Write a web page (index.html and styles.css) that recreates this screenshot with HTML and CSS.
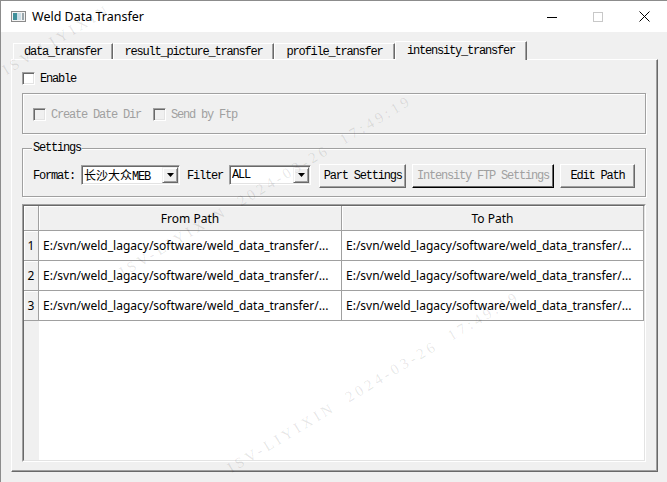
FILE: index.html
```html
<!DOCTYPE html>
<html>
<head>
<meta charset="utf-8">
<title>Weld Data Transfer</title>
<link rel="stylesheet" href="styles.css">
</head>
<body>
<div class="window">
  <div class="titlebar">
    <svg class="app-icon" width="15" height="11" viewBox="0 0 15 11">
      <rect x="0.5" y="0.5" width="14" height="10" fill="#f4f4f4" stroke="#8a8a8a"/>
      <rect x="2" y="2" width="4" height="7" fill="#3f8f9a"/>
      <rect x="6" y="2" width="4" height="7" fill="#c9dde6"/>
      <rect x="11" y="2" width="2" height="7" fill="#9aa7ad"/>
    </svg>
    <span class="title">Weld Data Transfer</span>
    <div class="caption">
      <span class="cap-btn"><svg width="10" height="10" viewBox="0 0 10 10"><path d="M0 5.5H10" stroke="#000" stroke-width="1"/></svg></span>
      <span class="cap-btn"><svg width="10" height="10" viewBox="0 0 10 10"><rect x="0.5" y="0.5" width="9" height="9" fill="none" stroke="#c8c8c8"/></svg></span>
      <span class="cap-btn"><svg width="11" height="11" viewBox="0 0 11 11"><path d="M0.5 0.5L10.5 10.5M10.5 0.5L0.5 10.5" stroke="#000" stroke-width="1"/></svg></span>
    </div>
  </div>

  <div class="client">
    <div class="tabs">
      <div class="tab t1">data_transfer</div>
      <div class="tab t2">result_picture_transfer</div>
      <div class="tab t3">profile_transfer</div>
      <div class="tab sel">intensity_transfer</div>
    </div>
    <div class="pane">
      <div class="check-row">
        <span class="cb"></span><span>Enable</span>
      </div>

      <div class="group g1">
        <span class="cb dis"></span><span class="dis-text">Create Date Dir</span>
        <span class="cb dis second"></span><span class="dis-text">Send by Ftp</span>
      </div>

      <div class="group g2">
        <div class="group-title">Settings</div>
        <div class="settings-row">
          <span>Format:</span>
          <div class="combo c1">
            <span class="combo-text"><span class="cjk">长沙大众</span>MEB</span>
            <span class="drop"><svg width="7" height="4" viewBox="0 0 7 4"><path d="M0 0H7L3.5 4Z" fill="#000"/></svg></span>
          </div>
          <span class="filter-label">Filter</span>
          <div class="combo c2">
            <span class="combo-text">ALL</span>
            <span class="drop"><svg width="7" height="4" viewBox="0 0 7 4"><path d="M0 0H7L3.5 4Z" fill="#000"/></svg></span>
          </div>
          <div class="btn b-part">Part Settings</div>
          <div class="btn b-ftp disabled">Intensity FTP Settings</div>
          <div class="btn b-edit">Edit Path</div>
        </div>
      </div>

      <div class="table">
        <div class="table-in">
          <div class="thead">
            <div class="corner"></div>
            <div class="th">From Path</div>
            <div class="th">To Path</div>
          </div>
          <div class="tbody">
            <div class="gutter">
              <div class="rh">1</div>
              <div class="rh">2</div>
              <div class="rh">3</div>
            </div>
            <div class="cells">
              <div class="td">E:/svn/weld_lagacy/software/weld_data_transfer/...</div>
              <div class="td">E:/svn/weld_lagacy/software/weld_data_transfer/...</div>
              <div class="td">E:/svn/weld_lagacy/software/weld_data_transfer/...</div>
              <div class="td">E:/svn/weld_lagacy/software/weld_data_transfer/...</div>
              <div class="td">E:/svn/weld_lagacy/software/weld_data_transfer/...</div>
              <div class="td">E:/svn/weld_lagacy/software/weld_data_transfer/...</div>
            </div>
          </div>
        </div>
      </div>
    </div>
  </div>

  <span class="wm wm1">ISV-LIYIXIN</span>
  <span class="wm wm2">ISV-LIYIXIN&nbsp;&nbsp;2024-03-26&nbsp;&nbsp;17:49:19</span>
  <span class="wm wm3">ISV-LIYIXIN&nbsp;&nbsp;2024-03-26&nbsp;&nbsp;17:49:19</span>
</div>
</body>
</html>
```

FILE: styles.css
```css
html, body {
  margin: 0;
  padding: 0;
  background: #f0f0f0;
}

.window {
  position: relative;
  width: 667px;
  height: 482px;
  box-sizing: border-box;
  border-left: 1px solid #8c8c8c;
  border-top: 1px solid #8c8c8c;
  background: #f0f0f0;
  display: flex;
  flex-direction: column;
  overflow: hidden;
  font-family: "Liberation Mono", "Noto Sans CJK SC", monospace;
  font-size: 12px;
  letter-spacing: -1.2px;
  color: #000;
}

/* ---------- title bar ---------- */
.titlebar {
  height: 31px;
  flex: none;
  background: #fff;
  display: flex;
  align-items: center;
  letter-spacing: 0;
}

.app-icon {
  margin-left: 10px;
  display: block;
}

.title {
  margin-left: 6px;
  font-family: "Noto Sans", sans-serif;
  font-size: 12.5px;
  color: #000;
}

.caption {
  margin-left: auto;
  display: flex;
  height: 100%;
}

.cap-btn {
  width: 46px;
  display: flex;
  align-items: center;
  justify-content: center;
}

.cap-btn svg {
  display: block;
}

/* ---------- client ---------- */
.client {
  flex: 1;
  min-height: 0;
  display: flex;
  flex-direction: column;
  padding: 9px 9px 10px 10px;
}

.tabs {
  flex: none;
  height: 19px;
  display: flex;
  align-items: flex-end;
  padding-left: 2px;
}

.tab {
  height: 17px;
  line-height: 17px;
  box-sizing: border-box;
  border-top: 1px solid #fff;
  border-left: 1px solid #fff;
  border-right: 1px solid #696969;
  box-shadow: inset -1px 0 #a0a0a0;
  text-align: center;
  white-space: nowrap;
}

.t1 { width: 100px; }
.t2 { width: 161px; }
.t3 { width: 121px; }

.tab.sel {
  width: 132px;
  height: 19px;
  line-height: 18px;
  position: relative;
  z-index: 1;
  background: #f0f0f0;
}

.pane {
  flex: 1;
  min-height: 0;
  margin-top: -1px;
  display: flex;
  flex-direction: column;
  border: 1px solid;
  border-color: #fff #696969 #696969 #fff;
  box-shadow: inset -1px -1px #a0a0a0;
  padding: 8px 11px 9px 10px;
}

/* ---------- checkboxes ---------- */
.check-row {
  display: flex;
  align-items: center;
  height: 21px;
  gap: 5px;
  flex: none;
}

.cb {
  width: 13px;
  height: 13px;
  box-sizing: border-box;
  background: #fff;
  border: 1px solid;
  border-color: #a0a0a0 #fff #fff #a0a0a0;
  box-shadow: inset 1px 1px #696969, inset -1px -1px #e3e3e3;
  flex: none;
}

.cb.dis {
  background: #f0f0f0;
}

.cb.second {
  margin-left: 12px;
}

.dis-text {
  color: #a0a0a0;
  margin-left: 5px;
}

/* ---------- groups ---------- */
.group {
  flex: none;
  border: 1px solid #a0a0a0;
  box-shadow: inset 1px 1px #fff, 1px 1px #fff;
}

.g1 {
  margin-top: 4px;
  height: 41px;
  box-sizing: border-box;
  display: flex;
  align-items: center;
  padding: 2px 0 0 10px;
}

.g2 {
  margin-top: 14px;
  padding: 0 10px 8px 10px;
}

.group-title {
  margin-top: -8px;
  margin-left: -1px;
  padding: 0 1px;
  width: max-content;
  height: 14px;
  line-height: 14px;
  background: #f0f0f0;
}

.settings-row {
  margin-top: 9px;
  height: 24px;
  display: flex;
  align-items: center;
  white-space: nowrap;
}

.combo {
  align-self: flex-start;
  margin-top: 1px;
  height: 20px;
  box-sizing: border-box;
  display: flex;
  align-items: center;
  background: #fff;
  border: 1px solid;
  border-color: #a0a0a0 #fff #fff #a0a0a0;
  box-shadow: inset 1px 1px #696969, inset -1px -1px #e3e3e3;
  padding: 1px 1px 1px 2px;
}

.c1 { margin-left: 6px; width: 100px; }
.c2 { margin-left: 6px; width: 83px; }

.combo-text {
  flex: 1;
  overflow: hidden;
}

.cjk {
  font-family: "Noto Sans CJK SC", sans-serif;
  letter-spacing: 0;
  font-size: 12px;
}

.drop {
  width: 16px;
  height: 16px;
  box-sizing: border-box;
  background: #f0f0f0;
  border: 1px solid;
  border-color: #f0f0f0 #696969 #696969 #f0f0f0;
  box-shadow: inset 1px 1px #fff, inset -1px -1px #a0a0a0;
  display: flex;
  align-items: center;
  justify-content: center;
  flex: none;
}

.drop svg { display: block; }

.filter-label {
  margin-left: 7px;
}

.btn {
  height: 24px;
  box-sizing: border-box;
  background: #f0f0f0;
  border: 1px solid;
  border-color: #fff #696969 #696969 #fff;
  box-shadow: inset -1px -1px #a0a0a0;
  display: flex;
  align-items: center;
  justify-content: center;
  margin-left: 6px;
}

.b-part { margin-left: 8px; width: 88px; }
.b-ftp { width: 143px; }
.b-edit { width: 76px; }

.btn.disabled {
  color: #a0a0a0;
  border-color: #fff #000 #000 #fff;
  box-shadow: inset -1px -1px #696969;
}

/* ---------- table ---------- */
.table {
  flex: 1;
  min-height: 0;
  margin-top: 7px;
  display: flex;
  border: 1px solid;
  border-color: #a0a0a0 #fff #fff #a0a0a0;
}

.table-in {
  flex: 1;
  display: flex;
  flex-direction: column;
  border: 1px solid;
  border-color: #696969 #e3e3e3 #e3e3e3 #696969;
  font-family: "Noto Sans", sans-serif;
  letter-spacing: 0;
  font-size: 12px;
}

.thead {
  display: grid;
  grid-template-columns: 15px 303px 1fr;
  height: 25px;
  flex: none;
}

.corner, .th {
  box-sizing: border-box;
  background: #f0f0f0;
  border-right: 1px solid #a0a0a0;
  border-bottom: 1px solid #a0a0a0;
  box-shadow: inset 1px 1px #fff;
}

.th {
  display: flex;
  align-items: center;
  justify-content: center;
}

.tbody {
  flex: 1;
  display: flex;
  min-height: 0;
}

.gutter {
  width: 15px;
  flex: none;
  background: #f0f0f0;
}

.rh {
  height: 30px;
  box-sizing: border-box;
  border-right: 1px solid #a0a0a0;
  border-bottom: 1px solid #a0a0a0;
  box-shadow: inset 1px 1px #fff;
  display: flex;
  align-items: center;
  justify-content: center;
}

.cells {
  flex: 1;
  background: #fff;
  display: grid;
  grid-template-columns: 303px 1fr;
  grid-auto-rows: 30px;
  align-content: start;
}

.td {
  box-sizing: border-box;
  border-right: 1px solid #a0a0a0;
  border-bottom: 1px solid #a0a0a0;
  padding-left: 4px;
  display: flex;
  align-items: center;
  white-space: nowrap;
  overflow: hidden;
}

/* ---------- watermark overlay ---------- */
.wm {
  position: absolute;
  z-index: 5;
  pointer-events: none;
  transform-origin: 0 50%;
  transform: rotate(-31deg);
  font-family: "Liberation Serif", serif;
  font-size: 15px;
  letter-spacing: 3.5px;
  line-height: 17px;
  white-space: nowrap;
  color: rgba(0, 0, 0, 0.1);
}

.wm1 { left: 3px; top: 62px; }
.wm2 { left: 120px; top: 264px; }
.wm3 { left: 228px; top: 460px; }
```
